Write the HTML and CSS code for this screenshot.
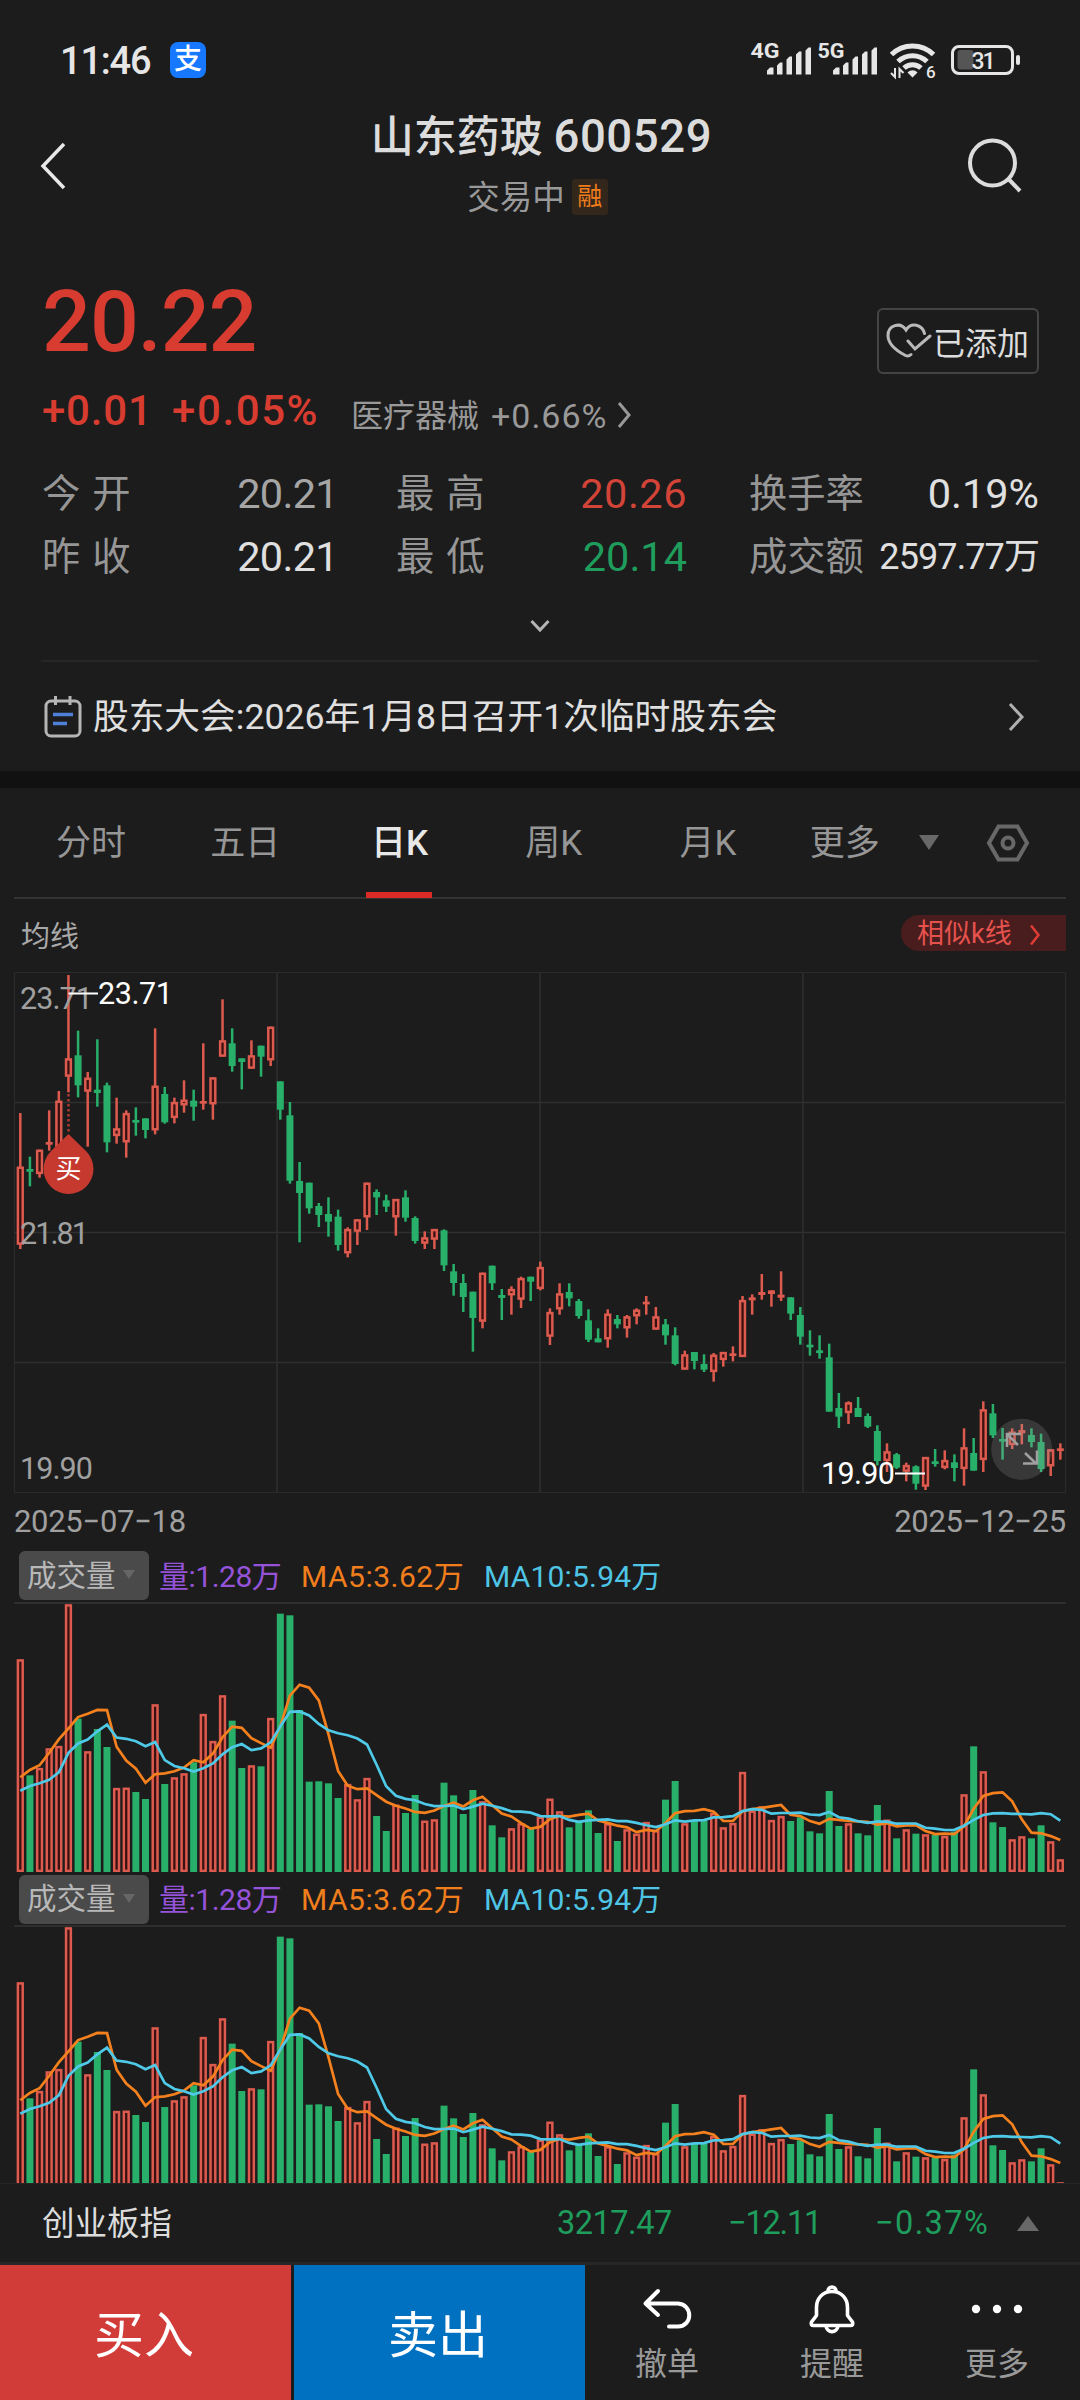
FILE: index.html
```html
<!DOCTYPE html>
<html lang="zh-CN">
<head>
  <meta charset="UTF-8">
  <title>山东药玻 600529</title>
  <link rel="stylesheet" href="styles.css">
</head>
<body>
  <div class="status-bar">
    <span class="clock">11:46</span>
    <span class="app-badge">支</span>
    <svg class="status-icons" width="272" height="52" viewBox="750 34 272 52">
      <g class="net-label">
        <text x="750.500" y="57.500" textLength="29" lengthAdjust="spacingAndGlyphs">4G</text>
        <text x="817.500" y="57.500" textLength="27" lengthAdjust="spacingAndGlyphs">5G</text>
      </g>
      <g fill="#e6e6e6">
        <path d="M767 74.500v-4l3-3h3.500v7zM777 74.500v-9l3-3h2.500v12zM786.500 74.500v-15l3-3h2.500v18zM796 74.500v-20l3-3h2.500v23zM805.500 74.500v-24l3-3h2.500v27z"/>
        <path d="M833 74.500v-4l3-3h3.500v7zM843 74.500v-9l3-3h2.500v12zM852.500 74.500v-15l3-3h2.500v18zM862 74.500v-20l3-3h2.500v23zM871.500 74.500v-24l3-3h2.500v27z"/>
        <path d="M912.500 77.500l-5-5a6.500 6.500 0 0 1 10 0z"/>
        <rect x="1016" y="55" width="4" height="10" rx="2"/>
      </g>
      <g fill="none" stroke="#e6e6e6" stroke-width="5">
        <path d="M891.500 54.500a30 30 0 0 1 42 0"/>
        <path d="M898 61.500a21 21 0 0 1 29 0"/>
        <path d="M904 68a12.500 12.500 0 0 1 17 0"/>
      </g>
      <path d="M895 68v9l-4-4M899.500 78v-9l4 4" fill="none" stroke="#e6e6e6" stroke-width="2"/>
      <text class="wifi-gen" x="926" y="78">6</text>
      <rect x="952.500" y="46.500" width="60" height="27" rx="6.500" fill="none" stroke="#e6e6e6" stroke-width="3"/>
      <rect x="957.500" y="50" width="16" height="19.500" rx="3" fill="#555"/>
      <text class="battery-num" x="971.500" y="68.500" textLength="24">31</text>
    </svg>
  </div>

  <header class="header">
    <svg width="30" height="50" viewBox="0 0 30 50"><path d="M25 3L4 25l21 22" fill="none" stroke="#e8e8e8" stroke-width="3.500"/></svg>
    <div class="title-box">
      <h1>山东药玻 <span class="code">600529</span></h1>
      <div class="sub-title"><span>交易中</span><span class="rong">融</span></div>
    </div>
    <svg width="56" height="56" viewBox="0 0 56 56"><circle cx="26.500" cy="25" r="22.500" fill="none" stroke="#dcdcdc" stroke-width="4"/><path d="M42.500 41L54 53" stroke="#dcdcdc" stroke-width="4"/></svg>
  </header>

  <section class="quote">
    <div class="price-row">
      <span class="price">20.22</span>
      <button class="added" type="button">
        <svg width="46" height="36" viewBox="0 0 46 36" fill="none" stroke="#b9b9b9" stroke-width="3" stroke-linecap="round"><path d="M25 31.500c-1.500 1.500-3.500 2-5.500 1C9 27 2 20 2 12.500 2 2 14.500-1.500 20 7c5-8.500 16.500-5.500 18.500 3.500"/><path d="M22 18l7 8 15-13"/></svg>
        <span>已添加</span>
      </button>
    </div>
    <div class="change-row">
      <span class="change">+0.01</span>
      <span class="change pct">+0.05%</span>
      <span class="sector">医疗器械</span><span class="sector-num">+0.66%</span>
      <svg width="15" height="28" viewBox="0 0 15 28"><path d="M2 2l10 12L2 26" fill="none" stroke="#999" stroke-width="3"/></svg>
    </div>
    <div class="stats">
      <div class="stat"><span class="label two">今开</span><span class="value dim first">20.21</span></div>
      <div class="stat"><span class="label two">最高</span><span class="value up">20.26</span></div>
      <div class="stat"><span class="label">换手率</span><span class="value">0.19%</span></div>
      <div class="stat"><span class="label two">昨收</span><span class="value first">20.21</span></div>
      <div class="stat"><span class="label two">最低</span><span class="value down">20.14</span></div>
      <div class="stat"><span class="label">成交额</span><span class="value small">2597.77万</span></div>
    </div>
    <div class="expand"><svg width="20" height="14" viewBox="0 0 20 14"><path d="M1.500 2L10 11l8.500-9" fill="none" stroke="#b5b5b5" stroke-width="3"/></svg></div>
    <div class="news">
      <svg width="38" height="44" viewBox="0 0 38 44" fill="none"><rect x="2" y="6" width="34" height="35" rx="5" stroke="#b5b5b5" stroke-width="3"/><path d="M11.500 1v9M26 1v9" stroke="#b5b5b5" stroke-width="3"/><path d="M9 19.500h20M9 28.500h14" stroke="#4f7fd6" stroke-width="3.500"/></svg>
      <span class="news-text">股东大会:2026年1月8日召开1次临时股东会</span>
      <svg width="18" height="30" viewBox="0 0 18 30"><path d="M3 2l12 13L3 28" fill="none" stroke="#b0b0b0" stroke-width="3"/></svg>
    </div>
  </section>

  <nav class="tabs">
    <span class="tab">分时</span>
    <span class="tab">五日</span>
    <span class="tab active">日K</span>
    <span class="tab">周K</span>
    <span class="tab">月K</span>
    <span class="tab more">更多</span>
    <span class="more-arrow"></span>
    <svg class="settings" width="44" height="38" viewBox="0 0 44 38" fill="none" stroke="#686868" stroke-width="4"><path d="M12.500 2.500h19L41 19l-9.500 16.500h-19L3 19z"/><circle cx="22" cy="19" r="5.500"/></svg>
  </nav>

  <div class="ma-bar">
    <span>均线</span>
    <span class="similar">相似k线 <svg width="12" height="22" viewBox="0 0 12 22"><path d="M2 1.500l7.500 9.500L2 20.500" fill="none" stroke="#e03c36" stroke-width="2.500"/></svg></span>
  </div>

  <svg id="kline" class="kline" width="1080" height="540" viewBox="0 0 1080 540">
    <path class="frame" d="M14.500 12.500H1065.500V532.500H14.500z"/>
    <path class="grid" d="M14 142.500H1065M14 272.500H1065M14 402.500H1065M277 13V532M540 13V532M803 13V532"/>
    <g id="candles"></g>
    <g class="axis">
      <text x="20" y="49" textLength="73">23.71</text>
      <text x="20" y="284" textLength="69">21.81</text>
      <text x="20" y="519" textLength="73">19.90</text>
    </g>
    <g class="extreme">
      <path d="M68.500 33.500H98M895 513.500H925"/>
      <text x="98" y="44" textLength="75">23.71</text>
      <text x="821" y="524" textLength="74">19.90</text>
    </g>
    <path class="buy-line" d="M68.500 134V174"/>
    <path class="buy-pin" d="M68.500 174L86.200 191.300A25 25 0 1 1 50.800 191.300z"/>
    <text class="buy-text" x="68.500" y="218">买</text>
    <circle cx="1021.700" cy="489.300" r="30.500" class="zoom-btn"/>
    <path class="zoom-arrows" d="M1018 485l-10-10M1007 487v-13h14M1025 493l10 9.500M1023 503.500h14v-13"/>
  </svg>
  <div class="dates"><span>2025−07−18</span><span>2025−12−25</span></div>

  <div class="vol-bar">
    <span class="picker">成交量<i></i></span>
    <span class="vol">量:1.28万</span>
    <span class="ma5">MA5:3.62万</span>
    <span class="ma10">MA10:5.94万</span>
  </div>
  <svg class="volume" width="1080" height="268" viewBox="0 0 1080 268"></svg>

  <div class="vol-bar second">
    <span class="picker">成交量<i></i></span>
    <span class="vol">量:1.28万</span>
    <span class="ma5">MA5:3.62万</span>
    <span class="ma10">MA10:5.94万</span>
  </div>
  <svg class="volume" width="1080" height="256" viewBox="0 0 1080 256"></svg>

  <div class="index-row">
    <span class="index-name">创业板指</span>
    <span class="num point">3217.47</span>
    <span class="num diff">−12.11</span>
    <span class="num rate">−0.37%</span>
    <span class="up-arrow"></span>
  </div>

  <footer class="actions">
    <button class="buy" type="button">买入</button>
    <button class="sell" type="button">卖出</button>
    <div class="tools">
      <div class="tool">
        <svg width="50" height="50" viewBox="0 0 50 50" fill="none" stroke="#fff" stroke-width="4" stroke-linecap="round" stroke-linejoin="round"><path d="M16 7L3.500 19.500 16 31M4 19.500h32c15 1 15 22.500 0 23H27"/></svg>
        <span>撤单</span>
      </div>
      <div class="tool">
        <svg width="50" height="50" viewBox="0 0 50 50" fill="none" stroke="#fff" stroke-width="3.600" stroke-linejoin="round"><path d="M25 7.500c-9.500 0-15.500 7-15.500 16v8L4.500 38c-1 2 0 3.500 2 3.500h37c2 0 3-1.500 2-3.500l-5-6.500v-8c0-9-6-16-15.500-16z"/><path d="M21 7.500c0-6 8-6 8 0M19 42c1 7.500 11 7.500 12 0"/></svg>
        <span>提醒</span>
      </div>
      <div class="tool">
        <svg width="52" height="50" viewBox="0 0 52 50" fill="#fff"><circle cx="5" cy="25" r="4.200"/><circle cx="26" cy="25" r="4.200"/><circle cx="47" cy="25" r="4.200"/></svg>
        <span>更多</span>
      </div>
    </div>
  </footer>

  <script src="chart.js"></script>
</body>
</html>
```
FILE: styles.css
```css
* {
  box-sizing: border-box;
}

body {
  margin: 0;
  width: 1080px;
  height: 2400px;
  overflow: hidden;
  background-color: #1c1c1c;
  color: #dcdcdc;
  font-family: Roboto, "Noto Sans CJK SC", sans-serif;
  line-height: 1;
}

svg {
  display: block;
  flex: none;
}

svg text {
  font-family: Roboto, "Noto Sans CJK SC", sans-serif;
}

button {
  border: none;
  padding: 0;
  font-family: inherit;
}

/* status bar */
.status-bar {
  display: flex;
  align-items: center;
  height: 100px;
  padding: 20px 58px 0 60px;
}

.clock {
  width: 110px;
  padding-top: 2px;
  font-size: 38px;
  font-weight: 500;
  letter-spacing: -1.200px;
  color: #e6e6e6;
}

.app-badge {
  width: 36px;
  height: 36px;
  border-radius: 8px;
  background-color: #1677ff;
  color: #fff;
  font-size: 28px;
  font-weight: 500;
  line-height: 35px;
  text-align: center;
}

.status-icons {
  margin-left: auto;
}

.net-label {
  fill: #e6e6e6;
  font-size: 20px;
  font-weight: 700;
}

.wifi-gen {
  fill: #e6e6e6;
  font-size: 17px;
  font-weight: 500;
}

.battery-num {
  fill: #e6e6e6;
  font-size: 23px;
  font-weight: 500;
}

/* header */
.header {
  display: flex;
  justify-content: space-between;
  height: 140px;
  padding: 0 58px 0 39px;
}

.header > svg {
  margin-top: 38px;
}

.header > svg:first-child {
  margin-top: 41px;
}

.title-box {
  text-align: center;
  padding-left: 48px;
}

h1 {
  margin: 14px 0 0;
  font-size: 43px;
  font-weight: 500;
  line-height: 46px;
}

.code {
  font-size: 45.500px;
  letter-spacing: 0.600px;
}

.sub-title {
  display: flex;
  justify-content: center;
  align-items: center;
  gap: 7px;
  margin: 19px 8px 0 0;
  font-size: 32.500px;
  color: #999;
}

.sub-title span:first-child {
  padding-top: 3px;
}

.rong {
  width: 36px;
  height: 36px;
  border-radius: 3px;
  background-color: #33261b;
  color: #ef7d1c;
  font-size: 25px;
  line-height: 35px;
  text-align: center;
}

/* quote */
.quote {
  height: 548px;
  padding: 0 41px;
  border-bottom: 17px solid #111;
}

.price-row {
  display: flex;
  justify-content: space-between;
  height: 140px;
}

.price {
  margin-top: 39px;
  margin-left: 1px;
  font-size: 86px;
  font-weight: 500;
  letter-spacing: -1px;
  color: #d83c31;
}

.added {
  display: flex;
  align-items: center;
  gap: 1px;
  width: 162px;
  height: 66px;
  margin-top: 68px;
  padding-left: 7px;
  border: 2px solid #444;
  border-radius: 6px;
  background: none;
  color: #dcdcdc;
  font-size: 32px;
}

.change-row {
  display: flex;
  align-items: center;
  height: 62px;
  color: #999;
}

.change {
  width: 130px;
  padding-left: 1px;
  font-size: 42px;
  font-weight: 500;
  letter-spacing: 0.800px;
  color: #d83c31;
}

.change.pct {
  width: 180px;
  letter-spacing: 1.600px;
}

.sector {
  width: 140px;
  margin-top: 9px;
  font-size: 32px;
}

.sector-num {
  width: 126px;
  margin-top: 9px;
  font-size: 34px;
  letter-spacing: 1px;
}

.change-row svg {
  margin-top: 7px;
}

.stats {
  display: grid;
  grid-template-columns: 292px 292px 290px;
  column-gap: 62px;
  grid-auto-rows: 63px;
  margin-top: 20px;
}

.stat {
  display: flex;
  justify-content: space-between;
  align-items: center;
}

.label {
  padding-top: 1px;
  font-size: 38.300px;
  color: #969696;
}

.label.two {
  padding-left: 1px;
  letter-spacing: 12px;
}

.value {
  font-size: 41.500px;
  color: #e0e0e0;
}

.value.dim {
  color: #a5a5a5;
}

.value.first {
  margin-right: -5px;
  letter-spacing: -0.700px;
}

.value.small {
  margin-left: -10px;
  padding-top: 1px;
  font-size: 36px;
  letter-spacing: -0.900px;
}

.value.up {
  color: #d24338;
  letter-spacing: 0.500px;
}

.value.down {
  color: #1f9d5c;
}

.expand {
  display: flex;
  justify-content: center;
  align-items: center;
  height: 74px;
  padding-top: 3px;
  border-bottom: 2px solid #262626;
}

.news {
  display: flex;
  align-items: center;
  height: 109px;
  padding: 0 14px 0 3px;
  color: #e0e0e0;
}

.news-text {
  flex: 1;
  margin-left: 11px;
  padding-top: 3px;
  font-size: 35.700px;
  white-space: nowrap;
}

/* tabs */
.tabs {
  position: relative;
  display: flex;
  align-items: center;
  height: 111px;
  margin: 0 14px;
  border-bottom: 2px solid #333;
  font-size: 35px;
  color: #969696;
}

.tab {
  position: relative;
  width: 154.300px;
  padding-top: 3px;
  line-height: 110px;
  text-align: center;
}

.tab:first-child {
  width: 154px;
}

.tab.more {
  width: 119px;
}

.tab.active {
  color: #e8e8e8;
  font-weight: 500;
}

.tab.active::after {
  content: "";
  position: absolute;
  left: 44px;
  bottom: 1px;
  width: 66px;
  height: 6px;
  background-color: #dc2a26;
}

.more-arrow {
  margin-left: 15px;
  border: 10px solid transparent;
  border-top: 15px solid #686868;
  border-bottom: none;
}

.settings {
  margin-left: 47px;
}

.ma-bar {
  display: flex;
  align-items: center;
  justify-content: space-between;
  height: 61px;
  padding: 16px 14px 0 21px;
  font-size: 29px;
  color: #a8a8a8;
}

.similar {
  display: flex;
  align-items: center;
  gap: 17px;
  width: 165px;
  height: 36px;
  margin-top: -9px;
  padding: 3px 0 0 16px;
  border-radius: 18px 0 0 18px;
  background-color: #491d1d;
  color: #e5524d;
  font-size: 27px;
}

/* k line */
.kline .frame {
  fill: none;
  stroke: #2b2b2b;
}

.kline .grid {
  fill: none;
  stroke: #2f2f2f;
  stroke-width: 1.500;
}

.axis text,
.extreme text {
  font-size: 30.500px;
}

.axis text {
  fill: #a0a0a0;
}

.extreme text {
  fill: #fff;
}

.extreme path {
  stroke: #fff;
  stroke-width: 2;
}

.buy-line {
  stroke: #a83a33;
  stroke-width: 2.500;
  stroke-dasharray: 2.500 2.500;
}

.buy-pin {
  fill: #c5392f;
}

.buy-text {
  fill: #fff;
  font-size: 26px;
  text-anchor: middle;
}

.zoom-btn {
  fill: rgba(160, 160, 160, 0.22);
}

.zoom-arrows {
  fill: none;
  stroke: #a0a0a0;
  stroke-width: 2.500;
}

.rise {
  fill: #3a1110;
  stroke: #dd5a4e;
  stroke-width: 2.500;
}

.fall {
  fill: #28b06b;
}

.wick-rise {
  fill: #dd5a4e;
}

.dates {
  display: flex;
  justify-content: space-between;
  height: 50px;
  padding: 6px 14px 0;
  font-size: 31px;
  letter-spacing: -0.300px;
  color: #a0a0a0;
}

/* volume */
.vol-bar {
  display: flex;
  align-items: center;
  height: 54px;
  margin: 0 14px;
  padding: 1px 0 2px 5px;
  border-bottom: 2px solid #2e2e2e;
  font-size: 30px;
  white-space: nowrap;
}

.vol-bar.second {
  height: 55px;
  padding-top: 3px;
}

.picker {
  display: flex;
  align-items: center;
  width: 130px;
  height: 49px;
  margin-right: 10px;
  padding: 2px 0 0 8px;
  border-radius: 6px;
  background-color: #4a4a4a;
  color: #b8b8b8;
  font-size: 29.500px;
}

.picker i {
  margin: -4px 0 0 7px;
  border: 6px solid transparent;
  border-top: 9px solid #666;
  border-bottom: none;
}

.vol,
.ma5,
.ma10 {
  padding-top: 2px;
}

.vol {
  width: 142px;
  letter-spacing: -0.500px;
  color: #9553da;
}

.ma5 {
  width: 183px;
  letter-spacing: 0.500px;
  color: #f07e1d;
}

.ma10 {
  letter-spacing: 0.200px;
  color: #4fc5e6;
}

.line5,
.line10 {
  fill: none;
  stroke: #f5811e;
  stroke-width: 2.700;
}

.line10 {
  stroke: #4fc9e8;
}

/* bottom */
.index-row {
  display: flex;
  align-items: center;
  height: 82px;
  border-top: 1px solid #262626;
  border-bottom: 3px solid #262626;
  padding: 1px 41px 0;
  font-size: 32.500px;
  color: #1f9d5c;
}

.index-name {
  width: 516px;
  padding: 2px 0 0 1px;
  color: #dcdcdc;
}

.point {
  width: 171px;
  letter-spacing: -0.500px;
}

.diff {
  width: 147px;
  letter-spacing: -1.200px;
}

.rate {
  width: 142px;
  letter-spacing: 1.400px;
}

.up-arrow {
  border: 11px solid transparent;
  border-top: none;
  border-bottom: 15px solid #686868;
}

.actions {
  display: flex;
  height: 135px;
}

.buy,
.sell {
  width: 291px;
  padding: 0 3px 4px 0;
  background-color: #d13c39;
  color: #fff;
  font-size: 50px;
}

.sell {
  margin-left: 3px;
  background-color: #0070c1;
}

.tools {
  display: flex;
  flex: 1;
}

.tool {
  display: flex;
  flex-direction: column;
  align-items: center;
  width: 165px;
  padding: 19px 1px 0 0;
  font-size: 32px;
  color: #999;
}

.tool span {
  margin-top: 14px;
}
```
FILE: chart.js
```js
// candle: [r = rise / g = fall, high, body top, body bottom, low], in thirds of a pixel
const candles = [
  ['r', 459, 620, 854, 867], ['g', 590, 627, 633, 679], ['r', 569, 569, 642, 653], ['r', 451, 546, 554, 572],
  ['r', 393, 422, 566, 572], ['r', 45, 295, 350, 397], ['g', 212, 286, 376, 412], ['r', 336, 353, 395, 560],
  ['g', 238, 389, 399, 440], ['g', 368, 376, 547, 577], ['r', 413, 505, 528, 551], ['r', 451, 459, 547, 593],
  ['g', 442, 480, 486, 527], ['g', 475, 475, 510, 535], ['r', 205, 377, 511, 523], ['g', 381, 402, 487, 491],
  ['r', 413, 426, 474, 490], ['r', 361, 419, 436, 458], ['g', 389, 422, 440, 482], ['r', 250, 423, 431, 449],
  ['r', 352, 352, 433, 479], ['r', 118, 241, 290, 290], ['g', 205, 250, 318, 335], ['g', 295, 295, 306, 388],
  ['r', 241, 286, 326, 326], ['g', 257, 257, 290, 350], ['r', 200, 200, 301, 318], ['g', 364, 364, 449, 479],
  ['g', 426, 466, 662, 671], ['g', 606, 663, 699, 847], ['g', 668, 668, 745, 761], ['g', 729, 738, 765, 801],
  ['g', 712, 762, 785, 830], ['g', 749, 770, 855, 872], ['r', 802, 807, 880, 892], ['r', 778, 778, 815, 855],
  ['r', 668, 668, 772, 810], ['g', 688, 696, 712, 765], ['g', 704, 721, 740, 756], ['r', 717, 717, 772, 827],
  ['g', 691, 712, 773, 785], ['g', 769, 774, 843, 851], ['r', 814, 832, 851, 867], ['r', 807, 807, 839, 867],
  ['g', 808, 811, 916, 933], ['g', 912, 934, 969, 1007], ['g', 942, 969, 1011, 1056], ['g', 995, 995, 1074, 1175],
  ['r', 938, 938, 1085, 1105], ['g', 917, 917, 970, 990], ['g', 987, 1005, 1014, 1080], ['r', 979, 987, 1006, 1064],
  ['r', 950, 954, 1019, 1044], ['g', 950, 950, 965, 1023], ['r', 905, 921, 987, 991], ['r', 1045, 1056, 1130, 1155],
  ['r', 970, 1000, 1048, 1064], ['g', 970, 996, 1015, 1039], ['g', 1017, 1023, 1068, 1076], ['g', 1048, 1081, 1139, 1146],
  ['g', 1105, 1135, 1147, 1147], ['r', 1048, 1061, 1138, 1163], ['g', 1065, 1077, 1093, 1105], ['r', 1065, 1069, 1105, 1133],
  ['r', 1045, 1049, 1069, 1093], ['r', 1008, 1025, 1033, 1064], ['r', 1041, 1069, 1109, 1109], ['g', 1077, 1093, 1126, 1154],
  ['g', 1102, 1126, 1212, 1216], ['r', 1172, 1183, 1229, 1229], ['g', 1176, 1176, 1203, 1228], ['g', 1183, 1212, 1229, 1236],
  ['r', 1179, 1184, 1236, 1265], ['r', 1176, 1176, 1200, 1220], ['r', 1159, 1180, 1188, 1204], ['r', 1008, 1020, 1191, 1191],
  ['r', 1003, 1012, 1021, 1064], ['r', 942, 996, 1005, 1019], ['r', 991, 991, 1002, 1040], ['r', 934, 1004, 1013, 1023],
  ['g', 1012, 1012, 1061, 1080], ['g', 1041, 1065, 1130, 1154], ['g', 1111, 1154, 1161, 1187], ['g', 1126, 1171, 1179, 1196],
  ['g', 1151, 1192, 1355, 1355], ['g', 1299, 1344, 1370, 1404], ['r', 1324, 1327, 1359, 1392], ['g', 1311, 1344, 1371, 1371],
  ['g', 1360, 1368, 1400, 1404], ['g', 1396, 1413, 1503, 1516], ['r', 1450, 1474, 1503, 1536], ['g', 1479, 1483, 1523, 1527],
  ['r', 1508, 1515, 1535, 1564], ['g', 1516, 1519, 1571, 1589], ['r', 1491, 1491, 1580, 1590], ['g', 1467, 1504, 1512, 1520],
  ['r', 1471, 1500, 1524, 1528], ['g', 1483, 1507, 1524, 1564], ['r', 1405, 1462, 1527, 1577], ['g', 1434, 1479, 1532, 1532],
  ['r', 1324, 1348, 1500, 1536], ['g', 1332, 1360, 1426, 1434], ['g', 1404, 1437, 1445, 1499], ['r', 1405, 1415, 1455, 1467],
  ['r', 1392, 1410, 1420, 1453], ['g', 1405, 1425, 1446, 1462], ['g', 1421, 1446, 1527, 1536], ['r', 1468, 1468, 1519, 1548],
  ['r', 1450, 1465, 1473, 1499]
];

const volumes = [
  635, 287, 309, 368, 375, 800, 457, 359, 426, 372,
  249, 250, 237, 216, 500, 261, 281, 293, 326, 471,
  390, 527, 451, 309, 317, 314, 459, 772, 767, 483,
  268, 269, 263, 219, 261, 215, 279, 165, 120, 199,
  174, 228, 151, 155, 265, 227, 171, 243, 209, 137,
  101, 128, 143, 126, 163, 217, 179, 131, 151, 182,
  114, 143, 90, 125, 112, 147, 123, 214, 270, 143,
  151, 151, 174, 131, 144, 297, 181, 194, 153, 165,
  150, 161, 119, 113, 240, 135, 143, 113, 107, 198,
  154, 98, 125, 112, 110, 108, 105, 118, 230, 374,
  299, 146, 132, 95, 104, 98, 137, 89, 35
];

// days before the first visible one, only used by the averages
const earlier = [147, 229, 258, 155, 216, 177, 239, 178, 176];

const STEP = 9.63;
const BASE = 267;
const centerX = i => 20.3 + i * STEP;

function drawBar(type, cx, top, bottom) {
  const h = Math.max(bottom - top, 2.7);
  if (type === 'g') {
    return `<rect class="fall" x="${cx - 3.5}" y="${top}" width="7" height="${h}"/>`;
  }
  if (h < 4) {
    return `<rect class="wick-rise" x="${cx - 3.5}" y="${top}" width="7" height="${h}"/>`;
  }
  return `<rect class="rise" x="${cx - 2.4}" y="${top + 1.1}" width="4.8" height="${h - 2.2}"/>`;
}

function average(days) {
  const all = earlier.concat(volumes);
  return volumes.map((v, i) => {
    const end = i + earlier.length + 1;
    const sum = all.slice(end - days, end).reduce((a, b) => a + b, 0);
    return `${centerX(i).toFixed(1)},${(BASE - sum / days / 3).toFixed(1)}`;
  }).join(' ');
}

document.getElementById('candles').innerHTML = candles.map(([type, high, top, bottom, low], i) => {
  const cx = centerX(i);
  const wick = `<rect class="${type === 'g' ? 'fall' : 'wick-rise'}" x="${cx - 1.25}" y="${high / 3}" width="2.5" height="${(low - high) / 3}"/>`;
  return wick + drawBar(type, cx, top / 3, bottom / 3);
}).join('');

document.querySelectorAll('.volume').forEach(svg => {
  const bars = volumes.map((v, i) => drawBar(candles[i][0], centerX(i), BASE - v / 3, BASE + 1)).join('');
  svg.innerHTML = bars +
    `<polyline class="line5" points="${average(5)}"/>` +
    `<polyline class="line10" points="${average(10)}"/>`;
});
```
